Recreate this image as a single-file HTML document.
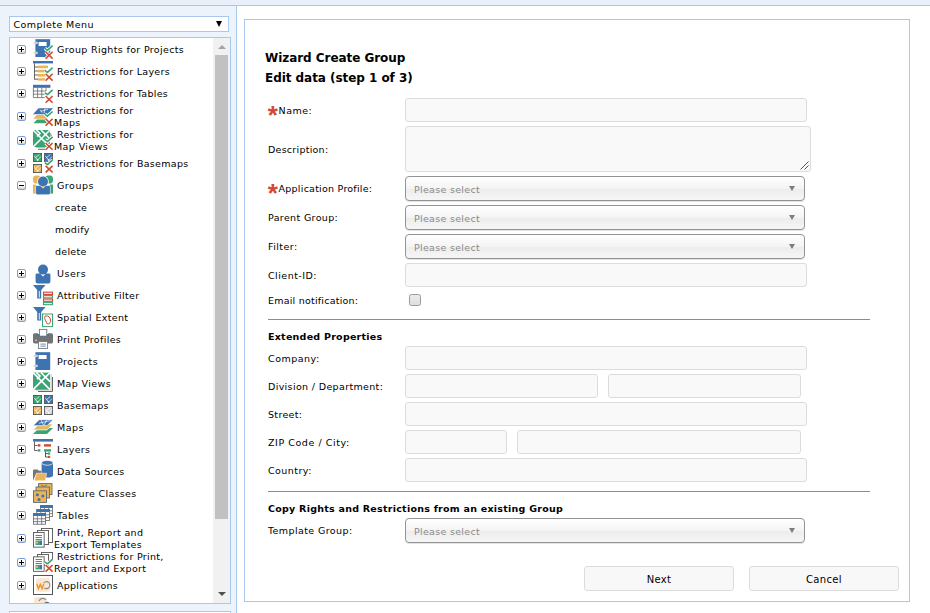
<!DOCTYPE html>
<html lang="en">
<head>
<meta charset="utf-8">
<title>Wizard Create Group</title>
<style>
html,body{margin:0;padding:0;}
body{width:930px;height:613px;overflow:hidden;position:relative;background:#e9f0fa;
 font-family:"DejaVu Sans","Liberation Sans",sans-serif;font-size:11px;color:#000;}
.abs{position:absolute;box-sizing:border-box;}
#topline{left:0;top:5px;width:930px;height:1px;background:#a9c8ef;}
#left{left:0;top:6px;width:236px;height:607px;background:#edf3fb;}
#vdiv{left:236px;top:6px;width:1px;height:607px;background:#a9c8ef;}
#main{left:237px;top:6px;width:693px;height:607px;background:#fff;}
#box{left:244px;top:19px;width:666px;height:583px;border:1px solid #a9c8ef;background:#fff;}
#menusel{left:9px;top:16px;width:220px;height:16px;border:1px solid #a9c8ef;background:#fff;
 font-size:9.5px;line-height:16px;padding-left:3.5px;letter-spacing:.42px;}
#menusel span.tx{position:relative;top:0px;}
#menusel .arr{position:absolute;right:6px;top:4px;width:0;height:0;border-left:3.2px solid transparent;border-right:3.2px solid transparent;border-top:6px solid #000;}
#tree{left:9px;top:37px;width:222px;height:567px;border:1px solid #a9c8ef;background:#fff;overflow:hidden;}
#box2{left:9px;top:611px;width:222px;height:10px;border:1px solid #a9c8ef;background:#fff;}
#sb{left:203px;top:0;width:17px;height:565px;background:#f1f1f1;}
#sb .thumb{position:absolute;left:2px;top:17px;width:13px;height:464px;background:#c1c1c1;}
#sb .up{position:absolute;left:4.5px;top:7px;width:0;height:0;border-left:4px solid transparent;border-right:4px solid transparent;border-bottom:4px solid #a3a3a3;}
#sb .dn{position:absolute;left:4.5px;bottom:7px;width:0;height:0;border-left:4px solid transparent;border-right:4px solid transparent;border-top:4px solid #505050;}
.row{position:absolute;left:0;width:203px;}
.row .t{position:absolute;white-space:nowrap;font-size:9.5px;line-height:14px;margin-top:1px;}
.row .ic{position:absolute;left:23px;overflow:visible;}
.ex{position:absolute;left:7px;width:9px;height:9px;box-sizing:border-box;border:1px solid #7b9fd4;border-radius:2px;background:linear-gradient(#fff 45%,#d8d2c2);}
.ex .h{position:absolute;left:1px;top:3px;width:5px;height:1px;background:#000;}
.ex .v{position:absolute;left:3px;top:1px;width:1px;height:5px;background:#000;}
.h1{font-weight:bold;font-size:12px;left:265px;white-space:nowrap;margin-top:2px;letter-spacing:-.05px;}
.lbl{left:268px;white-space:nowrap;font-size:9.5px;line-height:12px;margin-top:1px;}
.sec{left:268px;white-space:nowrap;font-size:9.5px;line-height:12px;font-weight:bold;margin-top:1px;}
.in{left:405px;height:24px;border:1px solid #dcdcdc;border-radius:3px;background:#f9f9f9;}
.sel{left:405px;width:400px;height:25px;border:1px solid #939393;border-radius:4px;box-shadow:0 1px 0 #e4e4e4;letter-spacing:.3px;
 background:linear-gradient(#ffffff 0%,#f4f4f4 50%,#ececec 51%,#f6f6f6 100%);
 font-size:9.5px;line-height:12px;color:#8a8a8a;padding:7px 0 0 8px;}
.sel i{position:absolute;right:9px;top:9px;width:0;height:0;border-left:3.5px solid transparent;border-right:3.5px solid transparent;border-top:5.5px solid #7d7d7d;}
.hr{left:268px;width:602px;height:1px;background:#8c8c8c;}
.btn{height:25px;width:150px;border:1px solid #dcdcdc;border-radius:3px;background:#f8f8f8;text-align:center;font-size:10px;letter-spacing:.36px;line-height:25px;}
.star{color:#d04a35;font-family:"Liberation Sans",sans-serif;font-weight:bold;font-size:26px;line-height:10px;display:inline-block;width:10.6px;height:10px;vertical-align:top;position:relative;top:4.5px;left:-.3px;}
.cb{left:409px;top:294px;width:12px;height:12px;border:1px solid #9b9b9b;border-radius:2.5px;background:linear-gradient(#ececec,#dedede);}
</style>
</head>
<body>
<div class="abs" id="topline"></div>
<div class="abs" id="left"></div>
<div class="abs" id="vdiv"></div>
<div class="abs" id="main"></div>
<div class="abs" id="box"></div>

<div class="abs" id="menusel">Complete Menu<span class="arr"></span></div>
<div class="abs" id="tree">
<div class="row" style="top:0px;height:22px"><span class="ex" style="top:7px"><b class="h"></b><b class="v"></b></span><svg class="ic" style="top:1px" width="20" height="22" viewBox="0 0 20 22"><rect x="2.4" y="0.2" width="14.8" height="17.8" fill="#3c73b0"/><rect x="0.6" y="3" width="3.6" height="1.8" fill="#b9b9b9" stroke="#fff" stroke-width=".5"/><rect x="0.6" y="13" width="3.6" height="1.8" fill="#b9b9b9" stroke="#fff" stroke-width=".5"/><rect x="5.6" y="3" width="8" height="4" fill="#fff"/><g transform="translate(0,0)"><path d="M11.9 9.4 L14.4 11.4 L19.6 6.7" fill="none" stroke="#fff" stroke-width="3.4"/><path d="M11.9 9.4 L14.4 11.4 L19.6 6.7" fill="none" stroke="#3aa574" stroke-width="1.6"/><path d="M12.6 12.8 L19.6 19.6 M19.6 12.8 L12.6 19.6" fill="none" stroke="#fff" stroke-width="3.2"/><path d="M12.6 12.8 L19.6 19.6 M19.6 12.8 L12.6 19.6" fill="none" stroke="#cf4a34" stroke-width="1.6"/></g></svg><span class="t" style="left:47px;top:4px;letter-spacing:0.347px">Group Rights for Projects</span></div>
<div class="row" style="top:22px;height:22px"><span class="ex" style="top:7px"><b class="h"></b><b class="v"></b></span><svg class="ic" style="top:1px" width="20" height="22" viewBox="0 0 20 22"><rect x="0" y="0" width="20" height="2.4" fill="#3c73b0"/><path d="M1.5 2.4 V18.6 M1.5 6 H5 M1.5 10 H5 M1.5 14 H5 M1.5 18.2 H5" stroke="#555" stroke-width=".9" fill="none"/><rect x="5" y="4.6" width="10" height="2.6" fill="#e9b45c"/><rect x="5" y="8.8" width="8" height="2.6" fill="#e9b45c"/><rect x="5" y="13" width="8" height="2.6" fill="#e9b45c"/><rect x="5" y="17.2" width="7" height="2.4" fill="#e9b45c"/><g transform="translate(0,0)"><path d="M11.9 9.4 L14.4 11.4 L19.6 6.7" fill="none" stroke="#fff" stroke-width="3.4"/><path d="M11.9 9.4 L14.4 11.4 L19.6 6.7" fill="none" stroke="#3aa574" stroke-width="1.6"/><path d="M12.6 12.8 L19.6 19.6 M19.6 12.8 L12.6 19.6" fill="none" stroke="#fff" stroke-width="3.2"/><path d="M12.6 12.8 L19.6 19.6 M19.6 12.8 L12.6 19.6" fill="none" stroke="#cf4a34" stroke-width="1.6"/></g></svg><span class="t" style="left:47px;top:4px;letter-spacing:0.293px">Restrictions for Layers</span></div>
<div class="row" style="top:44px;height:22px"><span class="ex" style="top:7px"><b class="h"></b><b class="v"></b></span><svg class="ic" style="top:0px" width="20" height="22" viewBox="0 0 20 22"><rect x="0" y="2.8" width="17.4" height="3" fill="#3c73b0"/><path d="M.4 5.8 V15.6 H12 M4.6 5.8 V15.6 M8.8 5.8 V15.6 M13 5.8 V9 M0 9 H13 M0 12.2 H12" stroke="#666" stroke-width=".8" fill="none"/><g transform="translate(0,1.2)"><path d="M11.9 9.4 L14.4 11.4 L19.6 6.7" fill="none" stroke="#fff" stroke-width="3.4"/><path d="M11.9 9.4 L14.4 11.4 L19.6 6.7" fill="none" stroke="#3aa574" stroke-width="1.6"/><path d="M12.6 12.8 L19.6 19.6 M19.6 12.8 L12.6 19.6" fill="none" stroke="#fff" stroke-width="3.2"/><path d="M12.6 12.8 L19.6 19.6 M19.6 12.8 L12.6 19.6" fill="none" stroke="#cf4a34" stroke-width="1.6"/></g></svg><span class="t" style="left:47px;top:4px;letter-spacing:0.298px">Restrictions for Tables</span></div>
<div class="row" style="top:66px;height:24px"><span class="ex" style="top:8px"><b class="h"></b><b class="v"></b></span><svg class="ic" style="top:0px" width="20" height="22" viewBox="0 0 20 22"><g transform="translate(0,4.2)"><path d="M5.5 0 L20 0 L14.5 6 L0 6 Z" fill="#3c73b0"/><path d="M7 1.5 L9 4.5 M12 .5 L11 5 M15 1 L8 3" stroke="#fff" stroke-width=".9" stroke-opacity=".8"/><path d="M3.6 6.8 L15 6.8 L14.4 10.6 L0.4 10.6 Z" fill="#e9b45c"/><path d="M4 11.4 L14 11.4 L14.6 15 L0.4 15 Z" fill="#3aa574"/></g><g transform="translate(0,.8)"><path d="M11.9 9.4 L14.4 11.4 L19.6 6.7" fill="none" stroke="#fff" stroke-width="3.4"/><path d="M11.9 9.4 L14.4 11.4 L19.6 6.7" fill="none" stroke="#3aa574" stroke-width="1.6"/></g><g transform="translate(0,2)"><path d="M12.6 12.8 L19.6 19.6 M19.6 12.8 L12.6 19.6" fill="none" stroke="#fff" stroke-width="3.2"/><path d="M12.6 12.8 L19.6 19.6 M19.6 12.8 L12.6 19.6" fill="none" stroke="#cf4a34" stroke-width="1.6"/></g></svg><span class="t" style="left:47px;top:-1px;letter-spacing:0.306px">Restrictions for</span><span class="t" style="left:44px;top:11px;letter-spacing:0.433px">Maps</span></div>
<div class="row" style="top:90px;height:24px"><span class="ex" style="top:8px"><b class="h"></b><b class="v"></b></span><svg class="ic" style="top:2px" width="20" height="24" viewBox="0 0 20 24"><path d="M3 17.5 H12" stroke="#bbb" stroke-width="1"/><path d="M5 19.3 H12" stroke="#666" stroke-width="1"/><path d="M17.6 3 V7 M18.6 4.5 V7" stroke="#999" stroke-width=".9"/><rect x="0" y="0" width="17" height="17" fill="#3aa574"/><path d="M0 0 L17 17 M17 0 L0 17 M3.5 0 L7 3.5 L4 6.5 M8 0 L17 9" stroke="#fff" stroke-width="1.6" fill="none"/><g transform="translate(0,.2)"><path d="M11.9 9.4 L14.4 11.4 L19.6 6.7" fill="none" stroke="#fff" stroke-width="3.4"/><path d="M11.9 9.4 L14.4 11.4 L19.6 6.7" fill="none" stroke="#3aa574" stroke-width="1.6"/><path d="M12.6 12.8 L19.6 19.6 M19.6 12.8 L12.6 19.6" fill="none" stroke="#fff" stroke-width="3.2"/><path d="M12.6 12.8 L19.6 19.6 M19.6 12.8 L12.6 19.6" fill="none" stroke="#cf4a34" stroke-width="1.6"/></g></svg><span class="t" style="left:47px;top:-1px;letter-spacing:0.306px">Restrictions for</span><span class="t" style="left:44px;top:11px;letter-spacing:0.392px">Map Views</span></div>
<div class="row" style="top:114px;height:22px"><span class="ex" style="top:7px"><b class="h"></b><b class="v"></b></span><svg class="ic" style="top:0px" width="20" height="22" viewBox="0 0 20 22"><rect x="0.45" y="1.45" width="8.1" height="8.1" fill="#3aa574" stroke="#555" stroke-width=".9"/><path d="M1.2 3.8 L4.6 8 L8 4.6 M2.6 5.6 L6.4 2.4" stroke="#fff" stroke-opacity=".7" stroke-width="1" fill="none"/><circle cx="4.6" cy="8" r=".9" fill="#fff" fill-opacity=".85"/><rect x="11.45" y="1.45" width="8.1" height="8.1" fill="#3c73b0" stroke="#555" stroke-width=".9"/><path d="M12.2 3.8 L15.6 8 L19 4.6 M13.6 5.6 L17.4 2.4" stroke="#fff" stroke-opacity=".7" stroke-width="1" fill="none"/><circle cx="15.6" cy="8" r=".9" fill="#fff" fill-opacity=".85"/><rect x="0.45" y="12.45" width="8.1" height="8.1" fill="#e9b45c" stroke="#555" stroke-width=".9"/><path d="M1.2 14.8 L4.6 19 L8 15.6 M2.6 16.6 L6.4 13.4" stroke="#fff" stroke-opacity=".7" stroke-width="1" fill="none"/><circle cx="4.6" cy="19" r=".9" fill="#fff" fill-opacity=".85"/><g transform="translate(0,1.2)"><path d="M11.9 9.4 L14.4 11.4 L19.6 6.7" fill="none" stroke="#fff" stroke-width="3.4"/><path d="M11.9 9.4 L14.4 11.4 L19.6 6.7" fill="none" stroke="#3aa574" stroke-width="1.6"/></g><g transform="translate(0,1.4)"><path d="M12.6 12.4 L19.6 19 M19.6 12.4 L12.6 19" fill="none" stroke="#fff" stroke-width="3.2"/><path d="M12.6 12.4 L19.6 19 M19.6 12.4 L12.6 19" fill="none" stroke="#cf4a34" stroke-width="1.6"/></g></svg><span class="t" style="left:47px;top:4px;letter-spacing:0.304px">Restrictions for Basemaps</span></div>
<div class="row" style="top:136px;height:22px"><span class="ex" style="top:7px"><b class="h"></b></span><svg class="ic" style="top:0px" width="20" height="22" viewBox="0 0 20 22"><g><rect x="0" y="1.6" width="8" height="8" rx="3.4" fill="#e9b45c"/><rect x="0" y="10.6" width="3" height="9" fill="#e9b45c"/><rect x="12" y="1.6" width="8" height="8" rx="3.4" fill="#3aa574"/><rect x="17" y="10.6" width="3" height="9" fill="#3aa574"/><circle cx="10" cy="7.6" r="5.8" fill="#fff"/><circle cx="10" cy="7.6" r="5" fill="#3c73b0"/><path d="M3.6 11.6 h3.6 l2.8 2.6 l2.8 -2.6 h3.6 q1 0 1 1 v6.4 q0 1.8 -1.8 1.8 h-11.2 q-1.8 0 -1.8 -1.8 v-6.4 q0 -1 1 -1 Z" fill="#3c73b0" stroke="#fff" stroke-width=".6"/><path d="M8.4 12.6 l1.6 1.6 l1.6 -1.6 Z" fill="#e9b45c"/></g></svg><span class="t" style="left:47px;top:4px;letter-spacing:0.505px">Groups</span></div>
<div class="row" style="top:158px;height:22px"><span class="t" style="left:45px;top:4px;letter-spacing:0.349px">create</span></div>
<div class="row" style="top:180px;height:22px"><span class="t" style="left:45px;top:4px;letter-spacing:0.391px">modify</span></div>
<div class="row" style="top:202px;height:22px"><span class="t" style="left:45px;top:4px;letter-spacing:0.272px">delete</span></div>
<div class="row" style="top:224px;height:22px"><span class="ex" style="top:7px"><b class="h"></b><b class="v"></b></span><svg class="ic" style="top:1px" width="20" height="22" viewBox="0 0 20 22"><circle cx="10" cy="6.6" r="5" fill="#3c73b0"/><path d="M3.8 10.4 h3.2 l3 3 l3 -3 h3.2 q1.2 0 1.2 1.2 v6.8 q0 2 -2 2 h-10.8 q-2 0 -2 -2 v-6.8 q0 -1.2 1.2 -1.2 Z" fill="#3c73b0"/></svg><span class="t" style="left:47px;top:4px;letter-spacing:0.498px">Users</span></div>
<div class="row" style="top:246px;height:22px"><span class="ex" style="top:7px"><b class="h"></b><b class="v"></b></span><svg class="ic" style="top:0px" width="20" height="22" viewBox="0 0 20 22"><g transform="translate(0,1)"><path d="M0 0 L12.6 0 L8.2 5 L8.2 13.6 L4.2 13.6 L4.2 5 Z" fill="#3c73b0"/><rect x="5.8" y="6" width=".9" height="6.6" fill="#fff"/></g><rect x="10.5" y="8.2" width="9" height="2.3" fill="#fbeeee" stroke="#cf4a34" stroke-width="1.1"/><rect x="10.5" y="11.6" width="9" height="2.3" fill="#fbeeee" stroke="#3aa574" stroke-width="1.1"/><rect x="10.5" y="15" width="9" height="2.3" fill="#fbeeee" stroke="#cf4a34" stroke-width="1.1"/><rect x="10.5" y="18.4" width="9" height="2.3" fill="#fbeeee" stroke="#3aa574" stroke-width="1.1"/></svg><span class="t" style="left:47px;top:4px;letter-spacing:0.314px">Attributive Filter</span></div>
<div class="row" style="top:268px;height:22px"><span class="ex" style="top:7px"><b class="h"></b><b class="v"></b></span><svg class="ic" style="top:0px" width="20" height="22" viewBox="0 0 20 22"><g transform="translate(0,1)"><path d="M0 0 L12.6 0 L8.2 5 L8.2 13.6 L4.2 13.6 L4.2 5 Z" fill="#3c73b0"/><rect x="5.8" y="6" width=".9" height="6.6" fill="#fff"/></g><rect x="9.5" y="8" width="10" height="12.6" fill="#fff" stroke="#3aa574" stroke-width="1"/><path d="M12 10.2 q2.5 -1 4 .6 q2 2 1.6 4.6 q-.6 1.8 -1.8 2.6 q-1.6 .6 -2.2 -1.2 q-.8 -2 -1.6 -3.6 q-.8 -1.8 0 -3 Z" fill="none" stroke="#cf4a34" stroke-width="1"/></svg><span class="t" style="left:47px;top:4px;letter-spacing:0.341px">Spatial Extent</span></div>
<div class="row" style="top:290px;height:22px"><span class="ex" style="top:7px"><b class="h"></b><b class="v"></b></span><svg class="ic" style="top:0px" width="20" height="22" viewBox="0 0 20 22"><rect x="6.4" y="1.4" width="7.4" height="7" fill="#fff" stroke="#777" stroke-width=".9"/><path d="M1.6 5.2 h3.4 v2.6 h10 v-2.6 h3.4 q1.6 0 1.6 1.6 v7.2 q0 1.4 -1.4 1.4 h-16.8 q-1.8 0 -1.8 -1.6 v-7 q0 -1.6 1.6 -1.6 Z" fill="#737373"/><path d="M4 7.2 L5.4 6 h1 v2 h7.4 v-2 h1 L16 7.2 v1 h-12 Z" fill="#3c73b0"/><rect x="2" y="11.6" width="2" height="1.4" fill="#bbb"/><rect x="5.4" y="13.6" width="9.2" height="6.8" fill="#fff" stroke="#777" stroke-width=".9"/><path d="M7.4 16.1 h5.4 M7.4 18.1 h5.4" stroke="#3c73b0" stroke-width=".8"/></svg><span class="t" style="left:47px;top:4px;letter-spacing:0.34px">Print Profiles</span></div>
<div class="row" style="top:312px;height:22px"><span class="ex" style="top:7px"><b class="h"></b><b class="v"></b></span><svg class="ic" style="top:0px" width="20" height="22" viewBox="0 0 20 22"><g transform="translate(0,2)"><rect x="2.4" y="0.2" width="14.8" height="17.8" fill="#3c73b0"/><rect x="0.6" y="3" width="3.6" height="1.8" fill="#b9b9b9" stroke="#fff" stroke-width=".5"/><rect x="0.6" y="13" width="3.6" height="1.8" fill="#b9b9b9" stroke="#fff" stroke-width=".5"/><rect x="5.6" y="3" width="8" height="4" fill="#fff"/></g></svg><span class="t" style="left:47px;top:4px;letter-spacing:0.45px">Projects</span></div>
<div class="row" style="top:334px;height:22px"><span class="ex" style="top:7px"><b class="h"></b><b class="v"></b></span><svg class="ic" style="top:0px" width="20" height="22" viewBox="0 0 20 22"><path d="M5 19.5 H19.5 V5" stroke="#666" stroke-width="1" fill="none"/><path d="M2.5 17.8 H18 V2.5" stroke="#bbb" stroke-width="1.2" fill="none"/><rect x="17" y="3" width=".8" height="14.5" fill="#eee"/><g transform="translate(0,.6)"><rect x="0" y="0" width="17" height="17" fill="#3aa574"/><path d="M0 0 L17 17 M17 0 L0 17 M3.5 0 L7 3.5 L4 6.5 M8 0 L17 9" stroke="#fff" stroke-width="1.6" fill="none"/></g></svg><span class="t" style="left:47px;top:4px;letter-spacing:0.38px">Map Views</span></div>
<div class="row" style="top:356px;height:22px"><span class="ex" style="top:7px"><b class="h"></b><b class="v"></b></span><svg class="ic" style="top:0px" width="20" height="22" viewBox="0 0 20 22"><rect x="0.45" y="1.45" width="8.1" height="8.1" fill="#3aa574" stroke="#555" stroke-width=".9"/><path d="M1.2 3.8 L4.6 8 L8 4.6 M2.6 5.6 L6.4 2.4" stroke="#fff" stroke-opacity=".7" stroke-width="1" fill="none"/><circle cx="4.6" cy="8" r=".9" fill="#fff" fill-opacity=".85"/><rect x="11.45" y="1.45" width="8.1" height="8.1" fill="#3c73b0" stroke="#555" stroke-width=".9"/><path d="M12.2 3.8 L15.6 8 L19 4.6 M13.6 5.6 L17.4 2.4" stroke="#fff" stroke-opacity=".7" stroke-width="1" fill="none"/><circle cx="15.6" cy="8" r=".9" fill="#fff" fill-opacity=".85"/><rect x="0.45" y="12.45" width="8.1" height="8.1" fill="#e9b45c" stroke="#555" stroke-width=".9"/><path d="M1.2 14.8 L4.6 19 L8 15.6 M2.6 16.6 L6.4 13.4" stroke="#fff" stroke-opacity=".7" stroke-width="1" fill="none"/><circle cx="4.6" cy="19" r=".9" fill="#fff" fill-opacity=".85"/><rect x="11.45" y="12.45" width="8.1" height="8.1" fill="#d6d6d6" stroke="#555" stroke-width=".9"/><path d="M12.2 14.8 L15.6 19 L19 15.6 M13.6 16.6 L17.4 13.4" stroke="#fff" stroke-opacity=".7" stroke-width="1" fill="none"/><circle cx="15.6" cy="19" r=".9" fill="#fff" fill-opacity=".85"/></svg><span class="t" style="left:47px;top:4px;letter-spacing:0.328px">Basemaps</span></div>
<div class="row" style="top:378px;height:22px"><span class="ex" style="top:7px"><b class="h"></b><b class="v"></b></span><svg class="ic" style="top:0px" width="20" height="22" viewBox="0 0 20 22"><g transform="translate(0,3.2)"><path d="M6 8.9 L20 8.9 L14 14.9 L0 14.9 Z" fill="#3aa574"/><path d="M6 4.7 L20 4.7 L14 10.7 L0 10.7 Z" fill="#e9b45c" stroke="#fff" stroke-width=".7"/><path d="M6 0.5 L20 0.5 L14 6.5 L0 6.5 Z" fill="#3c73b0" stroke="#fff" stroke-width=".7"/><path d="M8 1 L10.5 6 M13.5 1 L11 6.2 M17 1.5 L6 4" stroke="#fff" stroke-width=".9" stroke-opacity=".75"/></g></svg><span class="t" style="left:47px;top:4px;letter-spacing:0.5px">Maps</span></div>
<div class="row" style="top:400px;height:22px"><span class="ex" style="top:7px"><b class="h"></b><b class="v"></b></span><svg class="ic" style="top:0px" width="20" height="22" viewBox="0 0 20 22"><rect x="0" y="1" width="20" height="2.6" fill="#3c73b0"/><path d="M1.5 3.6 V12.5 H4.6 M1.5 7.5 H4.6" stroke="#555" stroke-width=".9" fill="none"/><rect x="4.8" y="6.2" width="2.6" height="2.4" fill="#cf4a34"/><rect x="11" y="6.2" width="7" height="2.4" fill="#cf4a34"/><rect x="4.8" y="11.2" width="2.6" height="2.4" fill="#3aa574"/><rect x="11" y="11.2" width="7" height="2.4" fill="#3aa574"/><path d="M12.5 13.6 V19 H15 M12.5 15.6 H15" stroke="#444" stroke-width=".9" fill="none"/><rect x="15" y="14.4" width="2.2" height="2.2" fill="#3aa574"/><rect x="15" y="17.8" width="2.2" height="2.2" fill="#cf4a34"/></svg><span class="t" style="left:47px;top:4px;letter-spacing:0.312px">Layers</span></div>
<div class="row" style="top:422px;height:22px"><span class="ex" style="top:7px"><b class="h"></b><b class="v"></b></span><svg class="ic" style="top:0px" width="20" height="22" viewBox="0 0 20 22"><path d="M8.6 2.6 v12.6 a5.7 2.4 0 0 0 11.4 0 v-12.6 Z" fill="#3c73b0"/><ellipse cx="14.3" cy="2.8" rx="5.7" ry="2.4" fill="#3c73b0" stroke="#fff" stroke-width=".7"/><path d="M0 20.4 V10.4 q0 -1 1 -1 H4.6 l1.2 1.4 H8.4 v3 H3.4 Z" fill="#757575"/><path d="M3.4 13.2 H13.6 L12.4 20.8 H1.2 Z" fill="#e9b45c" stroke="#fff" stroke-width=".5"/></svg><span class="t" style="left:47px;top:4px;letter-spacing:0.356px">Data Sources</span></div>
<div class="row" style="top:444px;height:22px"><span class="ex" style="top:7px"><b class="h"></b><b class="v"></b></span><svg class="ic" style="top:0px" width="20" height="22" viewBox="0 0 20 22"><rect x="5.6" y="1.6" width="13.4" height="11" fill="#e9b45c" stroke="#666" stroke-width=".9"/><rect x="3" y="5" width="13.4" height="11" fill="#e9b45c" stroke="#666" stroke-width=".9"/><rect x="0.5" y="8.8" width="13" height="11.6" fill="#e9b45c" stroke="#666" stroke-width=".9"/><path d="M8 3 l3 1.4 l3 -1.4" stroke="#3c73b0" stroke-width=".8" fill="none"/><circle cx="4.4" cy="12.8" r="1.5" fill="#3c73b0"/><circle cx="9.8" cy="14" r="1.5" fill="#3c73b0"/><circle cx="6" cy="17.4" r="1.5" fill="#3c73b0"/></svg><span class="t" style="left:47px;top:4px;letter-spacing:0.32px">Feature Classes</span></div>
<div class="row" style="top:466px;height:22px"><span class="ex" style="top:7px"><b class="h"></b><b class="v"></b></span><svg class="ic" style="top:1px" width="20" height="22" viewBox="0 0 20 22"><rect x="7.4" y="0.4" width="12.2" height="11.2" fill="#fff" stroke="#666" stroke-width=".8"/><rect x="7" y="0" width="13" height="3" fill="#3c73b0"/><path d="M11.333333333333332 3 v9 M15.666666666666666 3 v9 M7 5.8 h13 M7 8.6 h13" stroke="#666" stroke-width=".8"/><rect x="3.8" y="4.4" width="12.6" height="11.2" fill="#fff" stroke="#666" stroke-width=".8"/><rect x="3.4" y="4" width="13.4" height="3" fill="#3c73b0"/><path d="M7.866666666666667 7 v9 M12.333333333333334 7 v9 M3.4 9.8 h13.4 M3.4 12.6 h13.4" stroke="#666" stroke-width=".8"/><rect x="0.4" y="8.4" width="12.2" height="10.799999999999999" fill="#fff" stroke="#666" stroke-width=".8"/><rect x="0" y="8" width="13" height="3" fill="#3c73b0"/><path d="M4.333333333333333 11 v8.6 M8.666666666666666 11 v8.6 M0 13.8 h13 M0 16.6 h13" stroke="#666" stroke-width=".8"/></svg><span class="t" style="left:47px;top:4px;letter-spacing:0.434px">Tables</span></div>
<div class="row" style="top:488px;height:24px"><span class="ex" style="top:8px"><b class="h"></b><b class="v"></b></span><svg class="ic" style="top:1px" width="20" height="22" viewBox="0 0 20 22"><rect x="8.45" y="1.45" width="11.1" height="14.1" fill="#fff" stroke="#555" stroke-width=".9"/><rect x="4.45" y="3.45" width="11.1" height="14.1" fill="#fff" stroke="#555" stroke-width=".9"/><rect x="0.45" y="5.45" width="10.7" height="14.7" fill="#fff" stroke="#555" stroke-width=".9"/><path d="M2.5 8.5 h6.5 M2.5 10.5 h6.5 M2.5 12.5 h6.5" stroke="#3c73b0" stroke-width=".9"/><rect x="2.5" y="13.5" width="4.5" height="4.5" fill="#3aa574"/><rect x="3" y="14.5" width="2" height="2" fill="#e9b45c"/><rect x="7" y="13.5" width="2" height="4.5" fill="#3c73b0"/></svg><span class="t" style="left:47px;top:-1px;letter-spacing:0.357px">Print, Report and</span><span class="t" style="left:44px;top:11px;letter-spacing:0.352px">Export Templates</span></div>
<div class="row" style="top:512px;height:24px"><span class="ex" style="top:8px"><b class="h"></b><b class="v"></b></span><svg class="ic" style="top:2px" width="20" height="22" viewBox="0 0 20 22"><rect x="8.45" y="0.45" width="11.1" height="8.1" fill="#fff" stroke="#555" stroke-width=".9"/><rect x="4.45" y="2.45" width="11.1" height="11.1" fill="#fff" stroke="#555" stroke-width=".9"/><rect x="0.45" y="4.8500000000000005" width="10.7" height="14.5" fill="#fff" stroke="#555" stroke-width=".9"/><path d="M2.5 7.5 h6.5 M2.5 9.5 h6.5 M2.5 11.5 h6.5" stroke="#3c73b0" stroke-width=".9"/><rect x="2.5" y="12.9" width="4.5" height="4.5" fill="#3aa574"/><rect x="3" y="13.9" width="2" height="2" fill="#e9b45c"/><rect x="7" y="12.9" width="2" height="4.5" fill="#3c73b0"/><g transform="translate(0,.5)"><path d="M11.9 9.4 L14.4 11.4 L19.6 6.7" fill="none" stroke="#fff" stroke-width="3.4"/><path d="M11.9 9.4 L14.4 11.4 L19.6 6.7" fill="none" stroke="#3aa574" stroke-width="1.6"/></g><g transform="translate(0,.2)"><path d="M12.6 12.8 L19.6 19.4 M19.6 12.8 L12.6 19.4" fill="none" stroke="#fff" stroke-width="3.2"/><path d="M12.6 12.8 L19.6 19.4 M19.6 12.8 L12.6 19.4" fill="none" stroke="#cf4a34" stroke-width="1.6"/></g></svg><span class="t" style="left:47px;top:-1px;letter-spacing:0.309px">Restrictions for Print,</span><span class="t" style="left:44px;top:11px;letter-spacing:0.349px">Report and Export</span></div>
<div class="row" style="top:536px;height:22px"><span class="ex" style="top:7px"><b class="h"></b><b class="v"></b></span><svg class="ic" style="top:1px" width="20" height="22" viewBox="0 0 20 22"><rect x=".5" y=".5" width="19" height="19" fill="#fff" stroke="#555" stroke-width="1"/><rect x="3" y="3" width="14" height="13.8" rx="2.4" fill="#fbe6cf"/><path d="M3.8 8.6 l1.6 5 l1.9 -4.2 l1.9 4.2 l1.6 -5" stroke="#e8922e" stroke-width="1.4" fill="none"/><path d="M10.6 8 a3.5 3.5 0 1 1 0.6 4.9" stroke="#8a8a8a" stroke-width="1.1" fill="none"/></svg><span class="t" style="left:47px;top:4px;letter-spacing:0.243px">Applications</span></div>
<div class="row" style="top:558px;height:22px"><svg class="ic" style="top:0px" width="20" height="22" viewBox="0 0 20 22"><rect x="1" y="1" width="13" height="8" rx="2.4" fill="#fbe6cf"/><path d="M6 5 a4 4 0 0 1 7 -1" stroke="#8a8a8a" stroke-width="1.2" fill="none"/><path d="M11.6 6.6 q2.4 -1.8 4.6 0 l0 1 l-4.6 0 Z" fill="#3c73b0"/></svg></div>
<div class="abs" id="sb"><span class="up"></span><span class="thumb"></span><span class="dn"></span></div>
</div>
<div class="abs" id="box2"></div>

<div class="abs h1" style="top:49px">Wizard Create Group</div>
<div class="abs h1" style="top:69px">Edit data (step 1 of 3)</div>

<div class="abs lbl" style="top:104px"><span class="star">*</span><span style="letter-spacing:0.466px">Name:</span></div>
<div class="abs in" style="top:98px;width:402px"></div>
<div class="abs lbl" style="top:143px;letter-spacing:0.253px">Description:</div>
<div class="abs in" style="top:126px;width:406px;height:46px"><svg style="position:absolute;right:1px;bottom:1px" width="9" height="9" viewBox="0 0 9 9"><path d="M0.5 8.5 L8.5 0.5 M4.5 8.5 L8.5 4.5" stroke="#555" stroke-width="1"/></svg></div>
<div class="abs lbl" style="top:182px"><span class="star">*</span><span style="letter-spacing:0.24px">Application Profile:</span></div>
<div class="abs sel" style="top:176px">Please select<i></i></div>
<div class="abs lbl" style="top:211px;letter-spacing:0.353px">Parent Group:</div>
<div class="abs sel" style="top:205px">Please select<i></i></div>
<div class="abs lbl" style="top:240px;letter-spacing:0.423px">Filter:</div>
<div class="abs sel" style="top:234px">Please select<i></i></div>
<div class="abs lbl" style="top:269px;letter-spacing:0.472px">Client-ID:</div>
<div class="abs in" style="top:263px;width:402px"></div>
<div class="abs lbl" style="top:294px;letter-spacing:0.221px">Email notification:</div>
<div class="abs cb"></div>
<div class="abs hr" style="top:319px"></div>
<div class="abs sec" style="top:330px;letter-spacing:0.249px">Extended Properties</div>
<div class="abs lbl" style="top:352px;letter-spacing:0.497px">Company:</div>
<div class="abs in" style="top:346px;width:402px"></div>
<div class="abs lbl" style="top:380px;letter-spacing:0.349px">Division / Department:</div>
<div class="abs in" style="top:374px;width:193px"></div>
<div class="abs in" style="top:374px;left:608px;width:193px"></div>
<div class="abs lbl" style="top:408px;letter-spacing:0.32px">Street:</div>
<div class="abs in" style="top:402px;width:402px"></div>
<div class="abs lbl" style="top:436px;letter-spacing:0.557px">ZIP Code / City:</div>
<div class="abs in" style="top:430px;width:102px"></div>
<div class="abs in" style="top:430px;left:517px;width:284px"></div>
<div class="abs lbl" style="top:464px;letter-spacing:0.45px">Country:</div>
<div class="abs in" style="top:458px;width:402px"></div>
<div class="abs hr" style="top:491px"></div>
<div class="abs sec" style="top:502px;letter-spacing:0.255px">Copy Rights and Restrictions from an existing Group</div>
<div class="abs lbl" style="top:524px;letter-spacing:0.4px">Template Group:</div>
<div class="abs sel" style="top:518px">Please select<i></i></div>
<div class="abs btn" style="left:584px;top:566px">Next</div>
<div class="abs btn" style="left:749px;top:566px">Cancel</div>
</body>
</html>
